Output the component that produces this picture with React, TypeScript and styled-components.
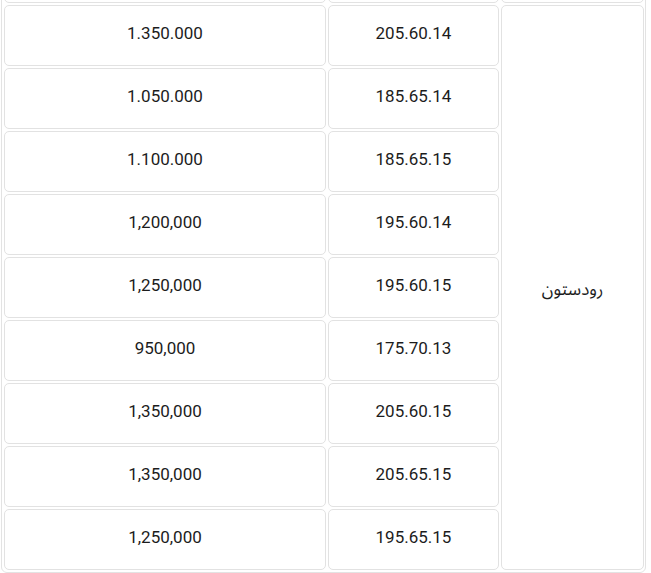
import React from 'react'
import styled, { createGlobalStyle } from 'styled-components'

type Row = { price: string; size: string }

const rows: Row[] = [
  { price: '1.350.000', size: '205.60.14' },
  { price: '1.050.000', size: '185.65.14' },
  { price: '1.100.000', size: '185.65.15' },
  { price: '1,200,000', size: '195.60.14' },
  { price: '1,250,000', size: '195.60.15' },
  { price: '950,000', size: '175.70.13' },
  { price: '1,350,000', size: '205.60.15' },
  { price: '1,350,000', size: '205.65.15' },
  { price: '1,250,000', size: '195.65.15' },
]

export default function App() {
  return (
    <>
      <GlobalStyle />
      <Viewport>
        <Card>
          <PriceTable dir="rtl">
            <colgroup>
              <col style={{ width: 143 }} />
              <col style={{ width: 171 }} />
              <col style={{ width: 322 }} />
            </colgroup>
            <tbody>
              {/* last row of the previous brand, scrolled out of view */}
              <tr>
                <Cell />
                <Cell />
                <Cell />
              </tr>
              {rows.map((r, i) => (
                <tr key={i}>
                  {i === 0 && (
                    <Cell $brand rowSpan={rows.length}>
                      رودستون
                    </Cell>
                  )}
                  <Cell>{r.size}</Cell>
                  <Cell>{r.price}</Cell>
                </tr>
              ))}
            </tbody>
          </PriceTable>
        </Card>
      </Viewport>
    </>
  )
}

const GlobalStyle = createGlobalStyle`
  html, body {
    margin: 0;
    padding: 0;
    background: #fff;
  }
`

const Viewport = styled.div`
  height: 573px;
  overflow: hidden;
`

const Card = styled.div`
  margin: -61px 5px 0 1px;
  border: 1px solid #e3e3e3;
  border-radius: 6px;
  background: #fff;
`

const PriceTable = styled.table`
  width: 100%;
  border-collapse: separate;
  border-spacing: 2px;
  table-layout: fixed;
  font-family: Roboto, "Noto Sans Arabic", "DejaVu Sans", sans-serif;
  font-size: 17px;
  color: #1c1c1c;
`

const Cell = styled.td<{ $brand?: boolean }>`
  height: 54px;
  padding: ${(p) => (p.$brand ? '5px 0 0' : '0 0 5px')};
  border: 1px solid #e2e2e2;
  border-radius: 5px;
  text-align: center;
  vertical-align: middle;
`
